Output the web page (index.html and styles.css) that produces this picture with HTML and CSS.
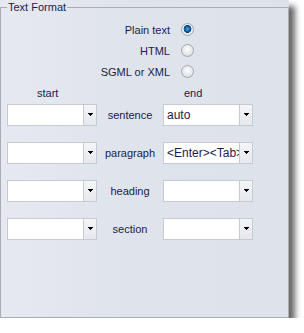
FILE: index.html
```
<!DOCTYPE html>
<html>
<head>
<meta charset="utf-8">
<link rel="stylesheet" href="styles.css">
</head>
<body>
<div class="panel">
  <fieldset class="group">
    <legend>Text Format</legend>
    <div class="formats">
      <span class="fmt">Plain text</span><span class="radio on"></span>
      <span class="fmt">HTML</span><span class="radio"></span>
      <span class="fmt">SGML or XML</span><span class="radio"></span>
    </div>
    <div class="heads"><span class="head start">start</span><span class="head">end</span></div>
    <div class="rows">
      <div class="row">
        <div class="combo"><span class="val"></span><span class="btn"><svg width="5" height="3" viewBox="0 0 5 3"><path d="M0 0h5v1h-1v1h-1v1h-1v-1h-1v-1h-1z" fill="#000"/></svg></span></div>
        <span class="lbl">sentence</span>
        <div class="combo"><span class="val">auto</span><span class="btn"><svg width="5" height="3" viewBox="0 0 5 3"><path d="M0 0h5v1h-1v1h-1v1h-1v-1h-1v-1h-1z" fill="#000"/></svg></span></div>
      </div>
      <div class="row">
        <div class="combo"><span class="val"></span><span class="btn"><svg width="5" height="3" viewBox="0 0 5 3"><path d="M0 0h5v1h-1v1h-1v1h-1v-1h-1v-1h-1z" fill="#000"/></svg></span></div>
        <span class="lbl">paragraph</span>
        <div class="combo"><span class="val">&lt;Enter&gt;&lt;Tab&gt;</span><span class="btn"><svg width="5" height="3" viewBox="0 0 5 3"><path d="M0 0h5v1h-1v1h-1v1h-1v-1h-1v-1h-1z" fill="#000"/></svg></span></div>
      </div>
      <div class="row">
        <div class="combo"><span class="val"></span><span class="btn"><svg width="5" height="3" viewBox="0 0 5 3"><path d="M0 0h5v1h-1v1h-1v1h-1v-1h-1v-1h-1z" fill="#000"/></svg></span></div>
        <span class="lbl">heading</span>
        <div class="combo"><span class="val"></span><span class="btn"><svg width="5" height="3" viewBox="0 0 5 3"><path d="M0 0h5v1h-1v1h-1v1h-1v-1h-1v-1h-1z" fill="#000"/></svg></span></div>
      </div>
      <div class="row">
        <div class="combo"><span class="val"></span><span class="btn"><svg width="5" height="3" viewBox="0 0 5 3"><path d="M0 0h5v1h-1v1h-1v1h-1v-1h-1v-1h-1z" fill="#000"/></svg></span></div>
        <span class="lbl">section</span>
        <div class="combo"><span class="val"></span><span class="btn"><svg width="5" height="3" viewBox="0 0 5 3"><path d="M0 0h5v1h-1v1h-1v1h-1v-1h-1v-1h-1z" fill="#000"/></svg></span></div>
      </div>
    </div>
  </fieldset>
</div>
</body>
</html>
```
FILE: styles.css
```
body {
  margin: 0;
  background: #fff;
  font-family: "Liberation Sans", Arial, sans-serif;
  font-size: 11px;
  color: #1c1c48;
}
.panel {
  width: 289px;
  height: 318px;
  box-sizing: border-box;
  background: linear-gradient(to right, #e6e9f0 0, #dfe3ec 45%, #dee2eb 100%);
  box-shadow: 6px 6px 6px rgba(0, 0, 0, 0.6);
}
.group {
  margin: 0;
  padding: 0;
  min-width: 0;
  height: 100%;
  box-sizing: border-box;
  border: 1px solid #a9adb4;
}
.group legend {
  margin-left: 6px;
  padding: 0 1px;
  line-height: 14px;
  font-size: 11px;
}
.formats {
  display: grid;
  grid-template-columns: 169px 12px;
  column-gap: 11px;
  grid-auto-rows: 21px;
  align-items: center;
  margin-top: 5px;
}
.fmt {
  text-align: right;
}
.radio {
  width: 13px;
  height: 13px;
  box-sizing: border-box;
  border-radius: 50%;
  border: 1px solid #a3a8ae;
  background: radial-gradient(circle at 50% 40%, #fdfdfd 0, #e6e8eb 55%, #cdd0d5 100%);
}
.radio.on {
  background: radial-gradient(circle at 50% 45%, #5fb4ea 0, #1c74bd 1.6px, #0d4f91 3.2px, #0b3f74 3.7px, #f6f7f8 4.2px, #e2e4e8 5.5px);
}
.heads {
  display: grid;
  grid-template-columns: 183px auto;
  line-height: 14px;
  margin-top: 4px;
}
.start {
  padding-left: 36px;
}
.rows {
  display: flex;
  flex-direction: column;
  gap: 16px;
  margin-top: 4px;
}
.row {
  display: grid;
  grid-template-columns: 90px 66px 90px;
  align-items: center;
  padding-left: 6px;
}
.lbl {
  text-align: center;
}
.combo {
  display: flex;
  height: 22px;
  box-sizing: border-box;
  border: 1px solid #c6cad1;
  background: #fff;
}
.val {
  flex: 1;
  min-width: 0;
  padding-left: 3px;
  font-size: 12px;
  line-height: 20px;
  white-space: nowrap;
  overflow: hidden;
}
.btn {
  width: 13px;
  box-sizing: border-box;
  border-left: 1px solid #c6cad1;
  background: linear-gradient(#f4f5f8, #e6e8ed);
  display: flex;
  align-items: center;
  justify-content: center;
}
.btn svg {
  display: block;
  margin-top: -1px;
}
```
